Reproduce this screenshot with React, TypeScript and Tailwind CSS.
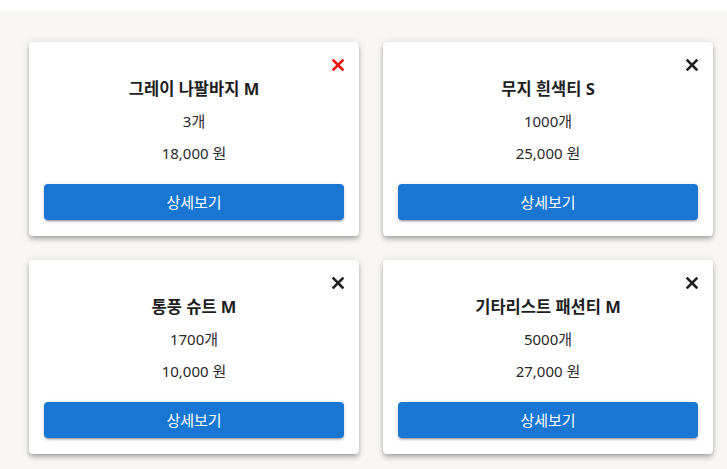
import React from 'react';

type Item = {
  name: string;
  count: number;
  price: string;
  active?: boolean;
};

const items: Item[] = [
  { name: '그레이 나팔바지 M', count: 3, price: '18,000', active: true },
  { name: '무지 흰색티 S', count: 1000, price: '25,000' },
  { name: '통풍 슈트 M', count: 1700, price: '10,000' },
  { name: '기타리스트 패션티 M', count: 5000, price: '27,000' },
];

const CloseIcon: React.FC<{ red?: boolean }> = ({ red }) => (
  <svg width="12" height="12" viewBox="0 0 12 12" className={red ? 'text-[#ee1111]' : 'text-[#222222]'}>
    <path d="M1.5 1.5 L10.5 10.5 M10.5 1.5 L1.5 10.5" stroke="currentColor" strokeWidth="2.6" strokeLinecap="square" />
  </svg>
);

const ProductCard: React.FC<{ item: Item }> = ({ item }) => (
  <div className="flex w-[330px] flex-col rounded-[4px] bg-white px-[15px] pb-4 pt-[14px] shadow-[0_2px_4px_-1px_rgba(0,0,0,0.2),0_4px_5px_0_rgba(0,0,0,0.14),0_1px_10px_0_rgba(0,0,0,0.12)]">
    <div className="flex h-[17px] items-center justify-end">
      <CloseIcon red={item.active} />
    </div>
    <div className="flex h-8 items-center justify-center text-[16.5px] font-bold text-[#1e1e1e]">{item.name}</div>
    <div className="flex h-8 items-center justify-center text-[15px] text-[#2a2a2a]">{item.count}개</div>
    <div className="flex h-8 items-center justify-center text-[15px] text-[#2a2a2a]">{item.price} 원</div>
    <button className="mt-[15px] h-9 w-full rounded-[4px] bg-[#1976d2] text-[15px] text-white shadow-[0_3px_1px_-2px_rgba(0,0,0,0.2),0_2px_2px_0_rgba(0,0,0,0.14),0_1px_5px_0_rgba(0,0,0,0.12)]">
      상세보기
    </button>
  </div>
);

export default function App() {
  return (
    <div className="min-h-[469px] bg-white font-['Noto_Sans','Noto_Sans_CJK_KR',sans-serif]">
      <div className="h-[10px] bg-white" />
      <div className="min-h-[459px] bg-[#f8f7f6] pl-[29px] pt-[32px]">
        <div className="grid w-[684px] grid-cols-2 gap-6">
          {items.map((item) => (
            <ProductCard key={item.name} item={item} />
          ))}
        </div>
      </div>
    </div>
  );
}
